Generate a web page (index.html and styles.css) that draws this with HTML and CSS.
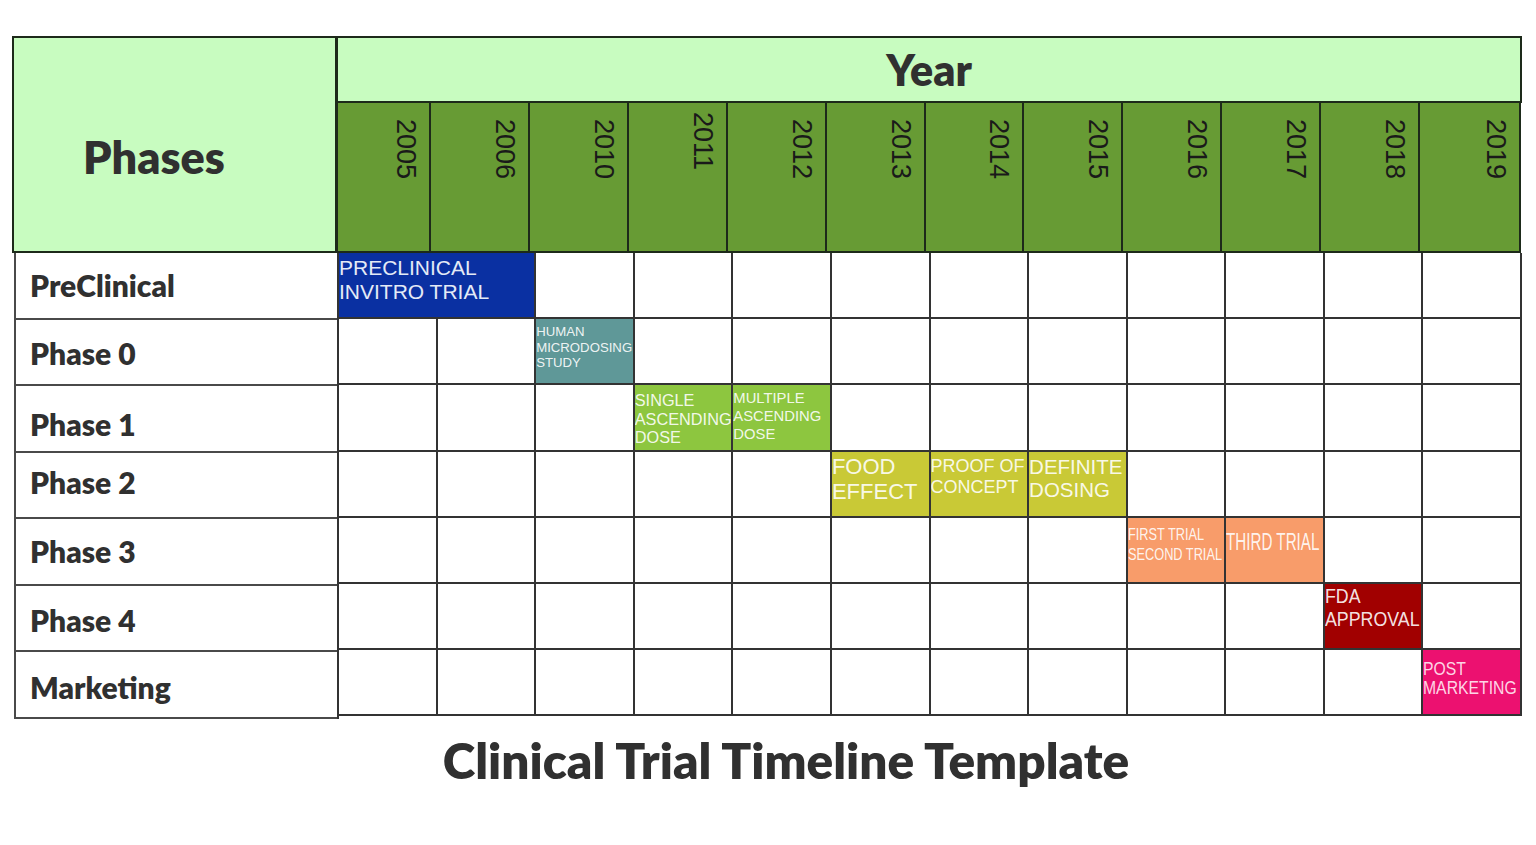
FILE: index.html
```html
<!DOCTYPE html>
<html lang="en">
<head>
<meta charset="utf-8">
<title>Clinical Trial Timeline Template</title>
<link rel="stylesheet" href="styles.css">
</head>
<body>
<div class="page">
  <div class="head">
    <div class="phases-head"><span>Phases</span></div>
    <div class="year-block">
      <div class="year-title">Year</div>
      <div class="years">
        <div class="yr"><span>2005</span></div>
        <div class="yr"><span>2006</span></div>
        <div class="yr"><span>2010</span></div>
        <div class="yr yr-up"><span>2011</span></div>
        <div class="yr"><span>2012</span></div>
        <div class="yr"><span>2013</span></div>
        <div class="yr"><span>2014</span></div>
        <div class="yr"><span>2015</span></div>
        <div class="yr"><span>2016</span></div>
        <div class="yr"><span>2017</span></div>
        <div class="yr"><span>2018</span></div>
        <div class="yr"><span>2019</span></div>
      </div>
    </div>
  </div>

  <div class="body">
    <div class="labels">
      <div class="label">PreClinical</div>
      <div class="label label-low1">Phase 0</div>
      <div class="label label-low">Phase 1</div>
      <div class="label label-up">Phase 2</div>
      <div class="label">Phase 3</div>
      <div class="label label-low2">Phase 4</div>
      <div class="label label-low3">Marketing</div>
    </div>

    <div class="grid">
      <!-- row 1 -->
      <div class="cell bar bar-pre span2">PRECLINICAL<br>INVITRO TRIAL</div>
      <div class="cell"></div><div class="cell"></div><div class="cell"></div><div class="cell"></div><div class="cell"></div>
      <div class="cell"></div><div class="cell"></div><div class="cell"></div><div class="cell"></div><div class="cell"></div>
      <!-- row 2 -->
      <div class="cell"></div><div class="cell"></div>
      <div class="cell bar bar-human">HUMAN<br>MICRODOSING<br>STUDY</div>
      <div class="cell"></div><div class="cell"></div><div class="cell"></div><div class="cell"></div><div class="cell"></div>
      <div class="cell"></div><div class="cell"></div><div class="cell"></div><div class="cell"></div>
      <!-- row 3 -->
      <div class="cell"></div><div class="cell"></div><div class="cell"></div>
      <div class="cell bar bar-single">SINGLE<br>ASCENDING<br>DOSE</div>
      <div class="cell bar bar-multi">MULTIPLE<br>ASCENDING<br>DOSE</div>
      <div class="cell"></div><div class="cell"></div><div class="cell"></div><div class="cell"></div><div class="cell"></div>
      <div class="cell"></div><div class="cell"></div>
      <!-- row 4 -->
      <div class="cell"></div><div class="cell"></div><div class="cell"></div><div class="cell"></div><div class="cell"></div>
      <div class="cell bar bar-food">FOOD<br>EFFECT</div>
      <div class="cell bar bar-proof">PROOF OF<br>CONCEPT</div>
      <div class="cell bar bar-def">DEFINITE<br>DOSING</div>
      <div class="cell"></div><div class="cell"></div><div class="cell"></div><div class="cell"></div>
      <!-- row 5 -->
      <div class="cell"></div><div class="cell"></div><div class="cell"></div><div class="cell"></div>
      <div class="cell"></div><div class="cell"></div><div class="cell"></div><div class="cell"></div>
      <div class="cell bar bar-first"><span class="squeeze">FIRST TRIAL<br>SECOND TRIAL</span></div>
      <div class="cell bar bar-third"><span class="squeeze">THIRD TRIAL</span></div>
      <div class="cell"></div><div class="cell"></div>
      <!-- row 6 -->
      <div class="cell"></div><div class="cell"></div><div class="cell"></div><div class="cell"></div><div class="cell"></div>
      <div class="cell"></div><div class="cell"></div><div class="cell"></div><div class="cell"></div><div class="cell"></div>
      <div class="cell bar bar-fda"><span class="squeeze">FDA<br>APPROVAL</span></div>
      <div class="cell"></div>
      <!-- row 7 -->
      <div class="cell"></div><div class="cell"></div><div class="cell"></div><div class="cell"></div><div class="cell"></div>
      <div class="cell"></div><div class="cell"></div><div class="cell"></div><div class="cell"></div><div class="cell"></div>
      <div class="cell"></div>
      <div class="cell bar bar-post"><span class="squeeze">POST<br>MARKETING</span></div>
    </div>
  </div>

  <h1 class="title">Clinical Trial Timeline Template</h1>
</div>
</body>
</html>
```

FILE: styles.css
```css
* { box-sizing: border-box; }

html, body {
  margin: 0;
  padding: 0;
  background: #ffffff;
}

body {
  width: 1536px;
  height: 845px;
  overflow: hidden;
  font-family: "Lato", "Open Sans", sans-serif;
  color: #333333;
}

.page {
  padding: 36px 0 0 12px;
}

/* ---------- header ---------- */
.head {
  display: flex;
  height: 217px;
}

.phases-head {
  width: 325px;
  height: 217px;
  background: #c8fcc0;
  border: 2px solid #1d2a1a;
  display: flex;
  align-items: center;
  padding: 24px 0 0 69px;
  font-weight: 800;
  font-size: 45px;
  color: #303030;
}

.year-block {
  width: 1185px;
  display: flex;
  flex-direction: column;
}

.year-title {
  height: 67px;
  background: #c8fcc0;
  border: 2px solid #1d2a1a;
  border-left-width: 1px;
  display: flex;
  align-items: center;
  justify-content: center;
  font-weight: 800;
  font-size: 43px;
  color: #303030;
}

.years {
  flex: 1;
  display: grid;
  grid-template-columns: 93px repeat(11, 1fr);
  background: #679b34;
  border-left: 1px solid #1d2a1a;
  border-right: 2px solid #1d2a1a;
  border-bottom: 2px solid #1d2a1a;
  width: 1184px;
}

.yr {
  border-right: 2px solid #1d2a1a;
  display: flex;
  justify-content: flex-end;
  padding: 16px 10px 0 0;
}

.yr:last-child { border-right: none; }

.yr span {
  writing-mode: vertical-rl;
  font-family: "Liberation Sans", Arial, sans-serif;
  font-size: 27px;
  line-height: 26px;
  color: #1a1a1a;
}

.yr-up { padding-top: 9px; }

/* ---------- body ---------- */
.body {
  display: flex;
  margin-left: 2px;
}

.labels {
  width: 323px;
  border-left: 2px solid #4a4a4a;
  display: flex;
  flex-direction: column;
}

.label {
  height: 66.5px;
  border-bottom: 2px solid #4a4a4a;
  display: flex;
  align-items: center;
  padding: 0 0 0 14px;
  font-weight: 800;
  font-size: 30px;
  color: #303030;
}

.label-low1 { padding-top: 3px; }
.label-low { padding-top: 11px; }
.label-up { padding-bottom: 5px; }
.label-low2 { padding-top: 4px; }
.label-low3 { padding-top: 5px; }

.grid {
  width: 1185px;
  display: grid;
  grid-template-columns: repeat(12, 1fr);
  grid-auto-rows: 66.2px;
  border-left: 2px solid #333333;
}

.cell {
  border-right: 2px solid #333333;
  border-bottom: 2px solid #333333;
  background: #ffffff;
}

.span2 { grid-column: span 2; }

.bar {
  font-family: "Liberation Sans", Arial, sans-serif;
  color: rgba(255, 255, 255, 0.9);
  white-space: nowrap;
  overflow: hidden;
  padding-left: 0;
}

.squeeze {
  display: inline-block;
  transform-origin: left top;
}

.bar-pre {
  background: #0a30a2;
  color: #e4eaf6;
  font-size: 21px;
  line-height: 23.5px;
  padding-top: 3px;
}

.bar-human {
  background: #5f9898;
  font-size: 13.2px;
  line-height: 15.5px;
  padding-top: 5px;
}

.bar-single {
  background: #8dc63f;
  font-size: 16.3px;
  line-height: 18.3px;
  padding-top: 6px;
}

.bar-multi {
  background: #8dc63f;
  font-size: 14.8px;
  line-height: 18px;
  padding-top: 4px;
}

.bar-food {
  background: #c9c936;
  font-size: 22px;
  line-height: 25px;
  padding-top: 2px;
}

.bar-proof {
  background: #c9c936;
  font-size: 18px;
  line-height: 21.6px;
  padding-top: 4px;
}

.bar-def {
  background: #c9c936;
  font-size: 20.5px;
  line-height: 23.4px;
  padding-top: 3px;
}

.bar-first {
  background: #f89c6a;
  font-size: 17px;
  line-height: 20.7px;
  padding-top: 7px;
}
.bar-first .squeeze { transform: scaleX(0.75); }

.bar-third {
  background: #f89c6a;
  font-size: 24.5px;
  line-height: 28px;
  padding-top: 10px;
}
.bar-third .squeeze { transform: scaleX(0.62); }

.bar-fda {
  background: #a10000;
  font-size: 20px;
  line-height: 23.4px;
  padding-top: 1px;
}
.bar-fda .squeeze { transform: scaleX(0.89); }

.bar-post {
  background: #ec1170;
  color: rgba(255, 225, 238, 0.95);
  font-size: 17.5px;
  line-height: 19px;
  padding-top: 10px;
}
.bar-post .squeeze { transform: scaleX(0.9); }

/* ---------- title ---------- */
.title {
  margin: 13px 0 0 0;
  padding-left: 24px;
  text-align: center;
  width: 1524px;
  font-family: "Lato", "Open Sans", sans-serif;
  font-weight: 800;
  font-size: 49.5px;
  line-height: 57px;
  color: #303030;
}
```
